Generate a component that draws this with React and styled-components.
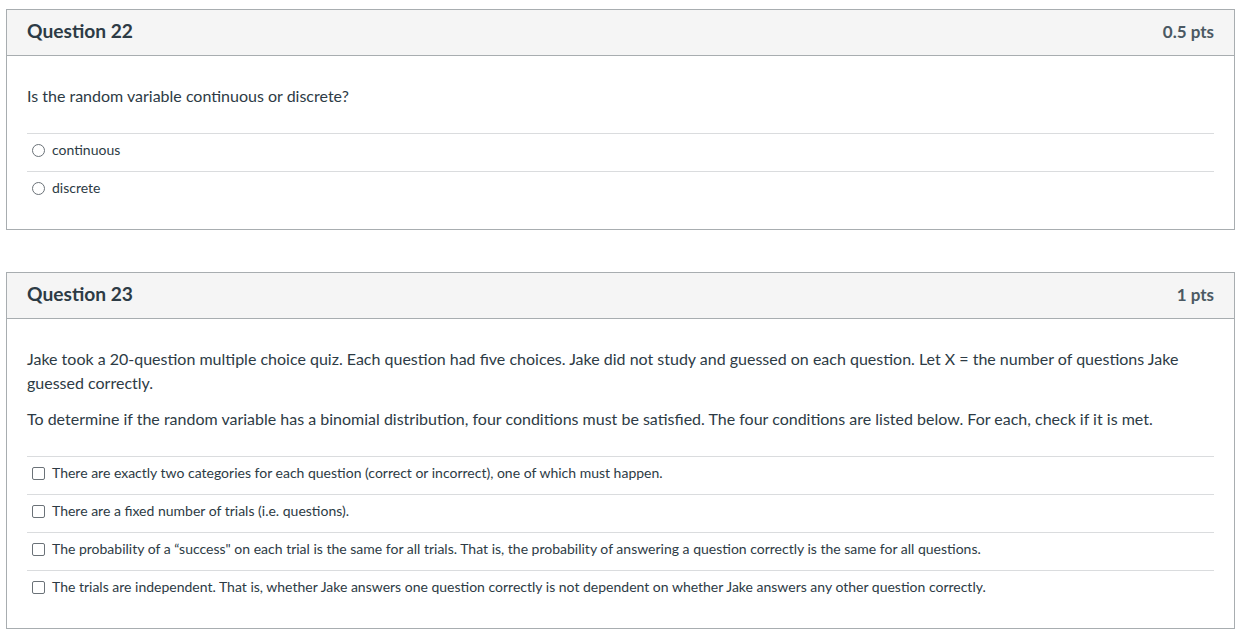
import React from "react";
import styled, { createGlobalStyle } from "styled-components";

const Global = createGlobalStyle`
  html, body { margin: 0; padding: 0; background: #fff; }
  body { font-family: Lato, "Noto Sans", "Liberation Sans", sans-serif; color: #2d3b45; }
`;

const Page = styled.div`
  display: flex;
  flex-direction: column;
  gap: 42px;
  padding: 9px 18px 0 6px;
`;

const Card = styled.section`
  border: 1px solid #a8adb0;
  background: #fff;
`;

const Header = styled.header`
  display: flex;
  align-items: center;
  justify-content: space-between;
  height: 45px;
  padding: 0 20px;
  background: #f5f5f5;
  border-bottom: 1px solid #a8adb0;
`;

const Title = styled.h3`
  margin: 0 0 4px;
  font-size: 19.2px;
  line-height: 24px;
  font-weight: 700;
  color: #2d3b45;
`;

const Points = styled.span`
  margin-bottom: 2px;
  font-size: 17px;
  line-height: 24px;
  font-weight: 700;
  color: #4b5963;
`;

const Body = styled.div`
  padding: 28px 20px 20px;
`;

const Para = styled.p`
  margin: 0 0 12px;
  font-size: 16px;
  line-height: 24px;
  color: #2d3b45;
  &:last-of-type { margin-bottom: 25px; }
`;

const Answers = styled.div`
  display: flex;
  flex-direction: column;
`;

const Answer = styled.label`
  display: flex;
  align-items: center;
  gap: 7px;
  padding: 6px 0 11px 5px;
  line-height: 20px;
  border-top: 1px solid #dadcde;
  font-size: 14px;
  color: #2d3b45;
`;

const Radio = styled.span`
  box-sizing: border-box;
  width: 13px;
  height: 13px;
  margin-top: 1px;
  border: 1px solid #6b7278;
  border-radius: 50%;
  flex: none;
`;

const Check = styled.span`
  box-sizing: border-box;
  width: 13px;
  height: 13px;
  margin-top: 1px;
  border: 1px solid #6b7278;
  border-radius: 2px;
  flex: none;
`;

function Question({ title, points, paragraphs, answers, multi }) {
  const Box = multi ? Check : Radio;
  return (
    <Card>
      <Header>
        <Title>{title}</Title>
        <Points>{points}</Points>
      </Header>
      <Body>
        {paragraphs.map((p, i) => (
          <Para key={i}>{p}</Para>
        ))}
        <Answers>
          {answers.map((a, i) => (
            <Answer key={i}>
              <Box />
              <span>{a}</span>
            </Answer>
          ))}
        </Answers>
      </Body>
    </Card>
  );
}

export default function App() {
  return (
    <>
      <Global />
      <Page>
        <Question
          title="Question 22"
          points="0.5 pts"
          paragraphs={["Is the random variable continuous or discrete?"]}
          answers={["continuous", "discrete"]}
        />
        <Question
          title="Question 23"
          points="1 pts"
          multi
          paragraphs={[
            "Jake took a 20-question multiple choice quiz. Each question had five choices. Jake did not study and guessed on each question. Let X = the number of questions Jake guessed correctly.",
            "To determine if the random variable has a binomial distribution, four conditions must be satisfied. The four conditions are listed below. For each, check if it is met.",
          ]}
          answers={[
            "There are exactly two categories for each question (correct or incorrect), one of which must happen.",
            "There are a fixed number of trials (i.e. questions).",
            "The probability of a \u201csuccess\" on each trial is the same for all trials. That is, the probability of answering a question correctly is the same for all questions.",
            "The trials are independent. That is, whether Jake answers one question correctly is not dependent on whether Jake answers any other question correctly.",
          ]}
        />
      </Page>
    </>
  );
}
